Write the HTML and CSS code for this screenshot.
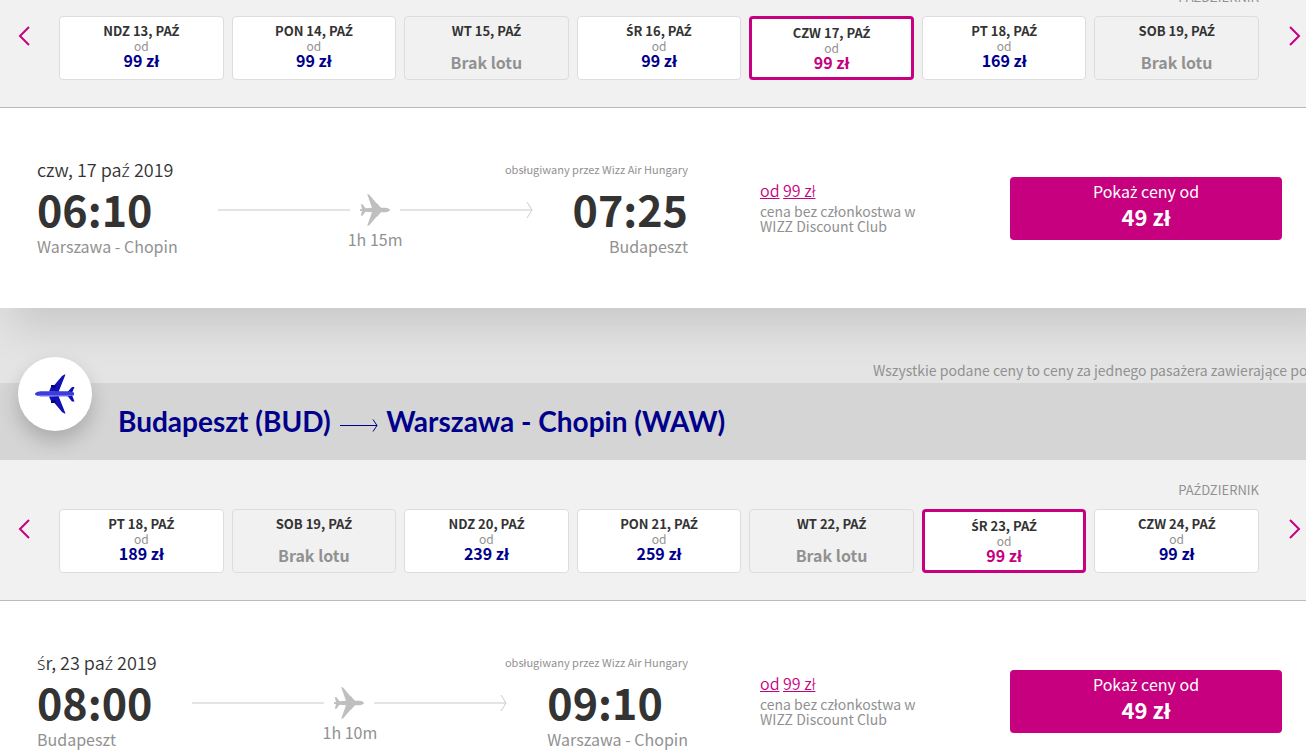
FILE: index.html
```html
<!doctype html>
<html lang="pl">
    <head>
        <meta charset="utf-8">
        <title>Wybierz lot</title>
        <meta name="viewport" content="width=device-width, initial-scale=1"/>
        <link rel="stylesheet" href="styles.css">
    </head>
    <body>
        <svg class="sprite" aria-hidden="true">
            <symbol id="chevron" viewBox="0 0 12 20"><path d="M11 1L2 10l9 9" fill="none" stroke="currentColor" stroke-width="2"/></symbol>
            <symbol id="plane" viewBox="0 0 30 32">
                <path d="M30 16c0-1.200-2.500-2.300-5-2.300h-4L18.500 11l-1-1.500-1-.2L9.500 1C9 .4 8.400.3 7.200.3L12 13.700 5.500 14.300 2.500 10.300H.8L2 14.800 0 15.300v1.400l2 .5L.8 21.700h1.700l3-4 6.500.6L7.200 31.700c1.200 0 1.800-.1 2.300-.7l7-8.300 1-.2 1-1.500 2.500-2.700h4c2.500 0 5-1.100 5-2.300z" fill="currentColor"/>
            </symbol>
            <symbol id="arrow-head" viewBox="0 0 7 18"><path d="M1 1l5 8-5 8" fill="none" stroke="currentColor" stroke-width="1"/></symbol>
        </svg>
        <main class="results">
            <section class="direction">
                <div class="calendar">
                    <div class="month">Pa<span class="ext">ź</span>dziernik</div>
                    <div class="days">
                        <button class="days__nav days__nav--prev" aria-label="Wcześniej"><svg><use href="#chevron"/></svg></button>
                        <div class="days__list">
                            <button class="day"><strong>ndz 13, pa<span class="ext">ź</span></strong><span>od</span><b>99 zł</b></button>
                            <button class="day"><strong>pon 14, pa<span class="ext">ź</span></strong><span>od</span><b>99 zł</b></button>
                            <button class="day day--empty" disabled><strong>wt 15, pa<span class="ext">ź</span></strong><b>Brak lotu</b></button>
                            <button class="day"><strong><span class="ext">ś</span>r 16, pa<span class="ext">ź</span></strong><span>od</span><b>99 zł</b></button>
                            <button class="day day--selected" aria-pressed="true"><strong>czw 17, pa<span class="ext">ź</span></strong><span>od</span><b>99 zł</b></button>
                            <button class="day"><strong>pt 18, pa<span class="ext">ź</span></strong><span>od</span><b>169 zł</b></button>
                            <button class="day day--empty" disabled><strong>sob 19, pa<span class="ext">ź</span></strong><b>Brak lotu</b></button>
                        </div>
                        <button class="days__nav days__nav--next" aria-label="Później"><svg><use href="#chevron"/></svg></button>
                    </div>
                </div>
                <div class="flight">
                    <div class="flight__info">
                        <div class="flight__head">
                            <span class="flight__date">czw, 17 pa<span class="ext">ź</span> 2019</span>
                            <span class="flight__carrier">obsługiwany przez Wizz Air Hungary</span>
                        </div>
                        <div class="flight__route">
                            <div class="stop"><time>06:10</time><span>Warszawa - Chopin</span></div>
                            <div class="path">
                                <div class="path__line">
                                    <i></i><svg class="path__plane"><use href="#plane"/></svg><i></i><svg class="path__head"><use href="#arrow-head"/></svg>
                                </div>
                                <span>1h 15m</span>
                            </div>
                            <div class="stop stop--arrival"><time>07:25</time><span>Budapeszt</span></div>
                        </div>
                    </div>
                    <div class="regular">
                        <a href="#"><span>od</span> <span>99 zł</span></a>
                        <p>cena bez członkostwa w WIZZ Discount Club</p>
                    </div>
                    <button class="show-prices"><span>Poka<span class="ext">ż</span> ceny od</span><b>49 zł</b></button>
                </div>
            </section>
            <section class="direction">
                <p class="note">Wszystkie podane ceny to ceny za jednego pasa<span class="ext">ż</span>era zawierające podatki</p>
                <header class="title">
                    <div class="title__badge">
                        <svg viewBox="0 0 40 40">
                            <path d="M14 17.500L16 13l1-2 2 .5L27 2l2.500-1.500h1L23.500 18zM14 22.500L16 27l1 2 2-.5 8 9.500 2.500 1.500h1L23.500 22z" fill="#1010b4"/>
                            <path d="M16 11h3.500l2 1.500-3 2-2.500-1zM16 29h3.500l2-1.500-3-2-2.500 1z" fill="#06067a"/>
                            <path d="M32 18.500l5-5.500h2.500L37 19zM32 21.500l5 6h2.500L37 21z" fill="#1010b4"/>
                            <path d="M0 20c0-1.500 3-2.800 7-2.800h27l5 1.300v2.700l-5 1.100H7c-4 0-7-1-7-2.300z" fill="#3d3ddc"/>
                            <path d="M2 21.200h36.500l-4.500 1.100H7c-2 0-4-.4-5-1.100z" fill="#8080f4"/>
                        </svg>
                    </div>
                    <h2>Budapeszt (BUD) <svg class="title__arrow" viewBox="0 0 38 14"><path d="M0 7.500h37M33 1.500l4 6-4 6" fill="none" stroke="currentColor"/></svg> Warszawa - Chopin (WAW)</h2>
                </header>
                <div class="calendar">
                    <div class="month">Pa<span class="ext">ź</span>dziernik</div>
                    <div class="days">
                        <button class="days__nav days__nav--prev" aria-label="Wcześniej"><svg><use href="#chevron"/></svg></button>
                        <div class="days__list">
                            <button class="day"><strong>pt 18, pa<span class="ext">ź</span></strong><span>od</span><b>189 zł</b></button>
                            <button class="day day--empty" disabled><strong>sob 19, pa<span class="ext">ź</span></strong><b>Brak lotu</b></button>
                            <button class="day"><strong>ndz 20, pa<span class="ext">ź</span></strong><span>od</span><b>239 zł</b></button>
                            <button class="day"><strong>pon 21, pa<span class="ext">ź</span></strong><span>od</span><b>259 zł</b></button>
                            <button class="day day--empty" disabled><strong>wt 22, pa<span class="ext">ź</span></strong><b>Brak lotu</b></button>
                            <button class="day day--selected" aria-pressed="true"><strong><span class="ext">ś</span>r 23, pa<span class="ext">ź</span></strong><span>od</span><b>99 zł</b></button>
                            <button class="day"><strong>czw 24, pa<span class="ext">ź</span></strong><span>od</span><b>99 zł</b></button>
                        </div>
                        <button class="days__nav days__nav--next" aria-label="Później"><svg><use href="#chevron"/></svg></button>
                    </div>
                </div>
                <div class="flight">
                    <div class="flight__info">
                        <div class="flight__head">
                            <span class="flight__date"><span class="ext">ś</span>r, 23 pa<span class="ext">ź</span> 2019</span>
                            <span class="flight__carrier">obsługiwany przez Wizz Air Hungary</span>
                        </div>
                        <div class="flight__route">
                            <div class="stop"><time>08:00</time><span>Budapeszt</span></div>
                            <div class="path">
                                <div class="path__line">
                                    <i></i><svg class="path__plane"><use href="#plane"/></svg><i></i><svg class="path__head"><use href="#arrow-head"/></svg>
                                </div>
                                <span>1h 10m</span>
                            </div>
                            <div class="stop stop--arrival"><time>09:10</time><span>Warszawa - Chopin</span></div>
                        </div>
                    </div>
                    <div class="regular">
                        <a href="#"><span>od</span> <span>99 zł</span></a>
                        <p>cena bez członkostwa w WIZZ Discount Club</p>
                    </div>
                    <button class="show-prices"><span>Poka<span class="ext">ż</span> ceny od</span><b>49 zł</b></button>
                </div>
            </section>
        </main>
    </body>
</html>
```
FILE: styles.css
```css
* {
    box-sizing: border-box;
}
html {
    overflow: hidden;
}
body {
    margin: 0;
    overflow: hidden;
    background-color: #e4e4e4;
    color: #333;
    font-family: "Noto Sans CJK SC", "Noto Sans", sans-serif;
    font-size: 14px;
}
button {
    font-family: inherit;
    cursor: pointer;
}
p {
    margin: 0;
}
.sprite {
    position: absolute;
    width: 0;
    height: 0;
}
/* Polish letters that the CJK family has no glyph for */
.ext {
    font-family: "Noto Sans", sans-serif;
    line-height: 1;
}
.results {
    margin-top: -33px;
}

/* calendar */
.calendar {
    background-color: #f1f1f1;
    border-bottom: 1px solid #bbb;
    padding-bottom: 27px;
}
.month {
    padding: 20px 47px 9px 0;
    color: #919191;
    font-size: 13px;
    line-height: 20px;
    text-align: right;
    text-transform: uppercase;
}
.days {
    display: flex;
    align-items: flex-start;
}
.days__nav {
    flex: none;
    display: flex;
    padding: 10px 0;
    border: 0;
    background: none;
    color: #c6007e;
}
.days__nav svg {
    width: 12px;
    height: 20px;
}
.days__nav--prev {
    width: 59px;
    padding-left: 18px;
}
.days__nav--next {
    width: 47px;
    padding-left: 30px;
}
.days__nav--next svg {
    transform: scaleX(-1);
}
.days__list {
    flex: 1;
    display: grid;
    grid-template-columns: repeat(7, 1fr);
    gap: 8px;
}
.day {
    display: flex;
    flex-direction: column;
    align-items: center;
    height: 64px;
    padding: 5px 0 0;
    border: 1px solid #ddd;
    border-radius: 4px;
    background-color: #fff;
    color: #333;
}
.day strong {
    font-size: 13px;
    line-height: 17px;
    text-transform: uppercase;
}
.day > span {
    color: #919191;
    font-size: 12px;
    line-height: 13px;
}
.day b {
    color: #00008b;
    font-size: 16px;
    line-height: 17px;
}
.day--selected {
    border: 3px solid #c6007e;
}
.day--selected b {
    color: #c6007e;
}
.day--empty {
    background-color: #f1f1f1;
}
.day--empty b {
    margin-top: 15px;
    color: #919191;
}

/* flight row */
.flight {
    position: relative;
    display: flex;
    height: 200px;
    margin-right: -40px;
    padding: 50px 64px 0 37px;
    background-color: #fff;
    box-shadow: 0 30px 40px -10px rgba(0, 0, 0, .12);
}
.flight__info {
    flex: 0 0 651px;
}
.flight__head {
    display: flex;
    justify-content: space-between;
    line-height: 22px;
}
.flight__date {
    font-size: 18px;
    font-weight: 350;
}
.flight__carrier {
    color: #919191;
    font-size: 11px;
}
.flight__route {
    display: flex;
}
.stop {
    display: flex;
    flex-direction: column;
    color: #919191;
    font-size: 16px;
    line-height: 20px;
}
.stop time {
    color: #333;
    font-size: 43px;
    font-weight: bold;
    line-height: 56px;
}
.stop--arrival span {
    text-align: right;
}
.path {
    flex: 1;
    margin: 0 40px;
    color: #919191;
    font-size: 16px;
    line-height: 18px;
    text-align: center;
}
.path__line {
    display: flex;
    align-items: center;
    padding: 14px 0 4px;
    color: #ccc;
}
.path__line i {
    flex: 1;
    height: 2px;
    background-color: #e4e4e4;
}
.path__plane {
    width: 30px;
    height: 32px;
    margin: 0 10px;
    color: #bfbfbf;
}
.path__head {
    width: 7px;
    height: 18px;
    margin-left: -6px;
}
.regular {
    width: 160px;
    margin-left: 72px;
    padding-top: 20px;
}
.regular a {
    display: block;
    color: #c6007e;
    font-size: 16px;
    font-weight: 350;
    line-height: 24px;
    text-decoration: none;
}
.regular a span {
    text-decoration: underline;
}
.regular p {
    margin-top: 2px;
    color: #919191;
    font-size: 14px;
    line-height: 15px;
}
.show-prices {
    display: flex;
    flex-direction: column;
    align-items: center;
    width: 272px;
    height: 63px;
    margin: 19px 0 0 auto;
    padding: 2px 0 0;
    border: 0;
    border-radius: 4px;
    background-color: #c6007e;
    color: #fff;
    font-size: 16px;
    line-height: 25px;
}
.show-prices b {
    font-size: 22px;
}

/* return flight title */
.note {
    margin-left: 873px;
    padding: 52px 0 3px;
    color: #919191;
    font-size: 14px;
    line-height: 20px;
    white-space: nowrap;
}
.title {
    position: relative;
    padding: 18px 0 19px 118px;
    background-color: #d5d5d5;
}
.title__badge {
    position: absolute;
    top: -26px;
    left: 18px;
    display: flex;
    width: 74px;
    height: 74px;
    border-radius: 50%;
    background-color: #fff;
    box-shadow: 0 10px 20px rgba(0, 0, 0, .2);
}
.title__badge svg {
    width: 40px;
    height: 40px;
    margin: auto;
}
.title h2 {
    margin: 0;
    color: #00008b;
    font-family: Lato, sans-serif;
    font-size: 28px;
    font-weight: 700;
    line-height: 40px;
}
.title__arrow {
    width: 38px;
    height: 14px;
    margin: 0 2px;
    vertical-align: 0;
}
```
